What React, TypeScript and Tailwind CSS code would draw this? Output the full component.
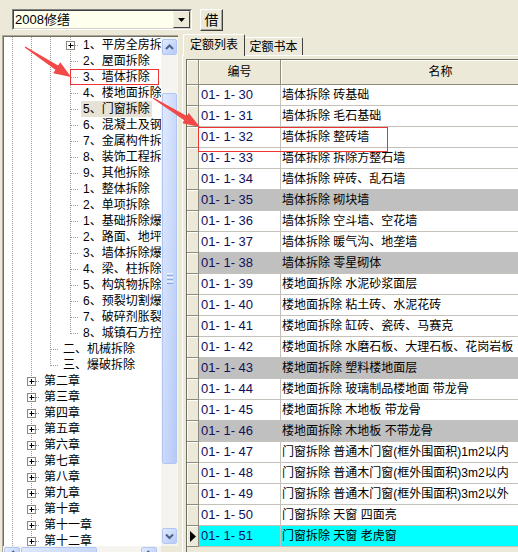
import React from 'react';

type TreeRow = { text: string; level: 0 | 1 | 2; plus?: boolean; last?: boolean; sel?: boolean };

const treeRows: TreeRow[] = [
  { text: '1、平房全房拆', level: 2, plus: true },
  { text: '2、屋面拆除', level: 2 },
  { text: '3、墙体拆除', level: 2 },
  { text: '4、楼地面拆除', level: 2 },
  { text: '5、门窗拆除', level: 2, sel: true },
  { text: '6、混凝土及钢', level: 2 },
  { text: '7、金属构件拆', level: 2 },
  { text: '8、装饰工程拆', level: 2 },
  { text: '9、其他拆除', level: 2 },
  { text: '1、整体拆除', level: 2 },
  { text: '2、单项拆除', level: 2 },
  { text: '1、基础拆除爆', level: 2 },
  { text: '2、路面、地坪', level: 2 },
  { text: '3、墙体拆除爆', level: 2 },
  { text: '4、梁、柱拆除', level: 2 },
  { text: '5、构筑物拆除', level: 2 },
  { text: '6、预裂切割爆', level: 2 },
  { text: '7、破碎剂胀裂', level: 2 },
  { text: '8、城镇石方控', level: 2, last: true },
  { text: '二、机械拆除', level: 1 },
  { text: '三、爆破拆除', level: 1, last: true },
  { text: '第二章', level: 0, plus: true },
  { text: '第三章', level: 0, plus: true },
  { text: '第四章', level: 0, plus: true },
  { text: '第五章', level: 0, plus: true },
  { text: '第六章', level: 0, plus: true },
  { text: '第七章', level: 0, plus: true },
  { text: '第八章', level: 0, plus: true },
  { text: '第九章', level: 0, plus: true },
  { text: '第十章', level: 0, plus: true },
  { text: '第十一章', level: 0, plus: true },
  { text: '第十二章', level: 0, plus: true },
];

type GridRow = { n: number; name: string; kind?: 'gray' | 'cur' };

const gridRows: GridRow[] = [
  { n: 30, name: '墙体拆除 砖基础' },
  { n: 31, name: '墙体拆除 毛石基础' },
  { n: 32, name: '墙体拆除 整砖墙' },
  { n: 33, name: '墙体拆除 拆除方整石墙' },
  { n: 34, name: '墙体拆除 碎砖、乱石墙' },
  { n: 35, name: '墙体拆除 砌块墙', kind: 'gray' },
  { n: 36, name: '墙体拆除 空斗墙、空花墙' },
  { n: 37, name: '墙体拆除 暖气沟、地垄墙' },
  { n: 38, name: '墙体拆除 零星砌体', kind: 'gray' },
  { n: 39, name: '楼地面拆除 水泥砂浆面层' },
  { n: 40, name: '楼地面拆除 粘土砖、水泥花砖' },
  { n: 41, name: '楼地面拆除 缸砖、瓷砖、马赛克' },
  { n: 42, name: '楼地面拆除 水磨石板、大理石板、花岗岩板' },
  { n: 43, name: '楼地面拆除 塑料楼地面层', kind: 'gray' },
  { n: 44, name: '楼地面拆除 玻璃制品楼地面 带龙骨' },
  { n: 45, name: '楼地面拆除 木地板 带龙骨' },
  { n: 46, name: '楼地面拆除 木地板 不带龙骨', kind: 'gray' },
  { n: 47, name: '门窗拆除 普通木门窗(框外围面积)1m2以内' },
  { n: 48, name: '门窗拆除 普通木门窗(框外围面积)3m2以内' },
  { n: 49, name: '门窗拆除 普通木门窗(框外围面积)3m2以外' },
  { n: 50, name: '门窗拆除 天窗 四面亮' },
  { n: 51, name: '门窗拆除 天窗 老虎窗', kind: 'cur' },
];

// guide x positions inside the tree content box (content starts at page x=4)
const guides = [8, 27, 46, 66];
const textLeft = [37, 56, 76];

function TreeLines({ row }: { row: TreeRow }) {
  const w = textLeft[row.level];
  const own = row.level + 1;
  const g = guides[own];
  const line = '#9d9a90';
  return (
    <svg width={w} height={16} className="shrink-0">
      {guides.slice(0, own).map((x) => (
        <line key={x} x1={x + 0.5} y1={0} x2={x + 0.5} y2={16} stroke={line} strokeDasharray="1 1" />
      ))}
      <line x1={g + 0.5} y1={0} x2={g + 0.5} y2={row.last ? 9 : 16} stroke={line} strokeDasharray="1 1" />
      <line x1={g + 1} y1={8.5} x2={w - 1} y2={8.5} stroke={line} strokeDasharray="1 1" />
      {row.plus && (
        <g>
          <rect x={g - 3.5} y={4.5} width={8} height={8} fill="#fff" stroke="#8c8a80" />
          <line x1={g - 1.5} y1={8.5} x2={g + 3.5} y2={8.5} stroke="#000" />
          <line x1={g + 0.5} y1={6} x2={g + 0.5} y2={11} stroke="#000" />
        </g>
      )}
    </svg>
  );
}

function Chevron({ dir }: { dir: 'up' | 'down' | 'left' | 'right' }) {
  const pts = {
    up: '1,6 4.5,2.5 8,6',
    down: '1,2.5 4.5,6 8,2.5',
    left: '6,1 2.5,4.5 6,8',
    right: '2.5,1 6,4.5 2.5,8',
  }[dir];
  return (
    <svg width="9" height="9" viewBox="0 0 9 9">
      <polyline points={pts} fill="none" stroke="#4d6185" strokeWidth="2" />
    </svg>
  );
}

const xpBtn =
  'rounded-[2px] border border-[#b2c6f4] bg-gradient-to-br from-[#e1eafe] to-[#b6caf7] flex items-center justify-center';

function arrow(x1: number, y1: number, x2: number, y2: number, headLen: number, headW: number, tailW: number, neckW: number) {
  const dx = x2 - x1;
  const dy = y2 - y1;
  const L = Math.hypot(dx, dy);
  const ux = dx / L;
  const uy = dy / L;
  const nx = -uy;
  const ny = ux;
  const kx = x2 - ux * headLen;
  const ky = y2 - uy * headLen;
  const p = (x: number, y: number) => `${x.toFixed(1)},${y.toFixed(1)}`;
  return [
    p(x1 + (nx * tailW) / 2, y1 + (ny * tailW) / 2),
    p(kx + (nx * neckW) / 2, ky + (ny * neckW) / 2),
    p(kx + (nx * headW) / 2, ky + (ny * headW) / 2),
    p(x2, y2),
    p(kx - (nx * headW) / 2, ky - (ny * headW) / 2),
    p(kx - (nx * neckW) / 2, ky - (ny * neckW) / 2),
    p(x1 - (nx * tailW) / 2, y1 - (ny * tailW) / 2),
  ].join(' ');
}

export default function App() {
  return (
    <div className="relative w-[518px] h-[552px] overflow-hidden bg-[#ece9d8] font-['Liberation_Sans','Noto_Sans_CJK_SC',sans-serif] text-[12px] text-black">
      {/* toolbar */}
      <div className="h-[34px] pt-[9px] pl-[12px] flex items-start gap-[8px]">
        <div className="w-[180px] h-[21px] border border-t-[#808080] border-l-[#808080] border-b-white border-r-white">
          <div className="h-full border border-t-[#404040] border-l-[#404040] border-b-[#d4d0c8] border-r-[#d4d0c8] bg-[#ffffee] flex items-center">
            <span className="flex-1 pl-[1px] text-[13px] leading-none">2008修缮</span>
            <div className="w-[17px] h-[17px] bg-[#ece9d8] border border-t-[#f4f3ee] border-l-[#f4f3ee] border-b-[#404040] border-r-[#404040] flex items-center justify-center">
              <svg width="7" height="4" viewBox="0 0 7 4">
                <polygon points="0,0 7,0 3.5,4" fill="#000" />
              </svg>
            </div>
          </div>
        </div>
        <div className="w-[23px] h-[22px] border border-t-white border-l-white border-b-[#404040] border-r-[#404040] shadow-[inset_-1px_-1px_0_#aca899] flex items-center justify-center text-[14px] leading-none">
          借
        </div>
      </div>

      <div className="flex items-start">
        {/* tree */}
        <div className="mt-[1px] ml-[2px] w-[178px] border-t border-l border-[#aca899]">
          <div className="border-t border-l border-[#716f64] flex">
            <div className="w-[157px] h-[509px] bg-white overflow-hidden">
              {treeRows.map((r, i) => (
                <div key={i} className="h-[16px] flex items-center whitespace-nowrap">
                  <TreeLines row={r} />
                  <span className={`h-[16px] leading-[16px] px-[2px] ml-[1px] ${r.sel ? 'bg-[#e6e3d6]' : ''}`}>
                    {r.text}
                  </span>
                </div>
              ))}
            </div>
            <div className="w-[17px] h-[509px] bg-[#f5f4ef] flex flex-col items-center pt-[2px]">
              <div className={`w-[15px] h-[16px] ${xpBtn}`}>
                <Chevron dir="up" />
              </div>
              <div className="h-[38px]" />
              <div className={`w-[15px] h-[371px] ${xpBtn}`}>
                <div className="flex flex-col gap-[1px]">
                  <div className="w-[6px] h-[1px] bg-[#eef4fe]" />
                  <div className="w-[6px] h-[1px] bg-[#8caae6]" />
                  <div className="w-[6px] h-[1px] bg-[#eef4fe]" />
                  <div className="w-[6px] h-[1px] bg-[#8caae6]" />
                  <div className="w-[6px] h-[1px] bg-[#eef4fe]" />
                  <div className="w-[6px] h-[1px] bg-[#8caae6]" />
                </div>
              </div>
              <div className="h-[64px]" />
              <div className={`w-[15px] h-[16px] ${xpBtn}`}>
                <Chevron dir="down" />
              </div>
            </div>
          </div>
          <div className="flex">
            <div className="w-[158px] h-[17px] bg-[#f5f4ef] flex pt-[1px] pl-[1px]">
              <div className={`w-[16px] h-[15px] ${xpBtn}`}>
                <Chevron dir="left" />
              </div>
              <div className={`ml-[1px] w-[76px] h-[15px] ${xpBtn}`} />
              <div className={`ml-[44px] w-[16px] h-[15px] ${xpBtn}`}>
                <Chevron dir="right" />
              </div>
            </div>
          </div>
        </div>

        {/* tabs + grid */}
        <div className="ml-[4px] flex-1 flex flex-col">
          <div className="h-[21px] flex items-end">
            <div className="ml-[1px] w-[62px] h-[22px] -mb-[1px] z-10 bg-[#ece9d8] border-t border-l border-white border-r border-r-[#404040] rounded-tl-[2px] rounded-tr-[2px] flex items-center justify-center pb-[1px]">
              定额列表
            </div>
            <div className="w-[58px] h-[18px] border-t border-white border-r border-r-[#404040] rounded-tr-[2px] flex items-center justify-center">
              定额书本
            </div>
          </div>
          <div className="h-[520px] border-t border-l border-white pt-[3px] pl-[3px]">
            <div className="h-full border-t border-l border-[#716f64] bg-[#ece9d8]">
              <div className="flex h-[25px]">
                <div className="w-[12px] border-r border-b border-[#8e8b7e] shadow-[inset_1px_1px_0_#fff]" />
                <div className="w-[82px] border-r border-b border-[#8e8b7e] shadow-[inset_1px_1px_0_#fff] flex items-center justify-center">
                  编号
                </div>
                <div className="w-[320px] border-r border-b border-[#8e8b7e] shadow-[inset_1px_1px_0_#fff] flex items-center justify-center">
                  名称
                </div>
              </div>
              {gridRows.map((r) => {
                const bg = r.kind === 'gray' ? 'bg-[#c0c0c0]' : r.kind === 'cur' ? 'bg-[#00ffff]' : 'bg-white';
                return (
                  <div key={r.n} className="flex h-[21px]">
                    <div className="w-[12px] border-r border-b border-[#8e8b7e] shadow-[inset_1px_1px_0_#fff] flex items-center justify-center">
                      {r.kind === 'cur' && (
                        <svg width="6" height="11" viewBox="0 0 6 11">
                          <polygon points="0,0 6,5.5 0,11" fill="#000" />
                        </svg>
                      )}
                    </div>
                    <div className={`w-[82px] border-r border-b border-[#c4c2ba] pl-[2px] flex items-center text-[13px] text-[#10105c] whitespace-pre ${bg}`}>
                      {`01- 1- ${r.n}`}
                    </div>
                    <div className={`w-[320px] border-b border-[#c4c2ba] pl-[1px] flex items-center whitespace-nowrap ${bg}`}>
                      {r.name}
                    </div>
                  </div>
                );
              })}
            </div>
          </div>
        </div>
      </div>

      {/* annotations */}
      <div className="absolute left-[70px] top-[69px] w-[89px] h-[16px] border border-[#ee3333]" />
      <div className="absolute left-[198px] top-[127px] w-[190px] h-[25px] border border-[#ee3333]" />
      <svg className="absolute left-0 top-0 pointer-events-none" width="518" height="552">
        <polygon points={arrow(25, 47, 71, 77, 17, 13, 1, 5)} fill="#f24848" />
        <polygon points={arrow(153, 98, 200, 127, 17, 12, 1, 5)} fill="#f24848" />
      </svg>
    </div>
  );
}
